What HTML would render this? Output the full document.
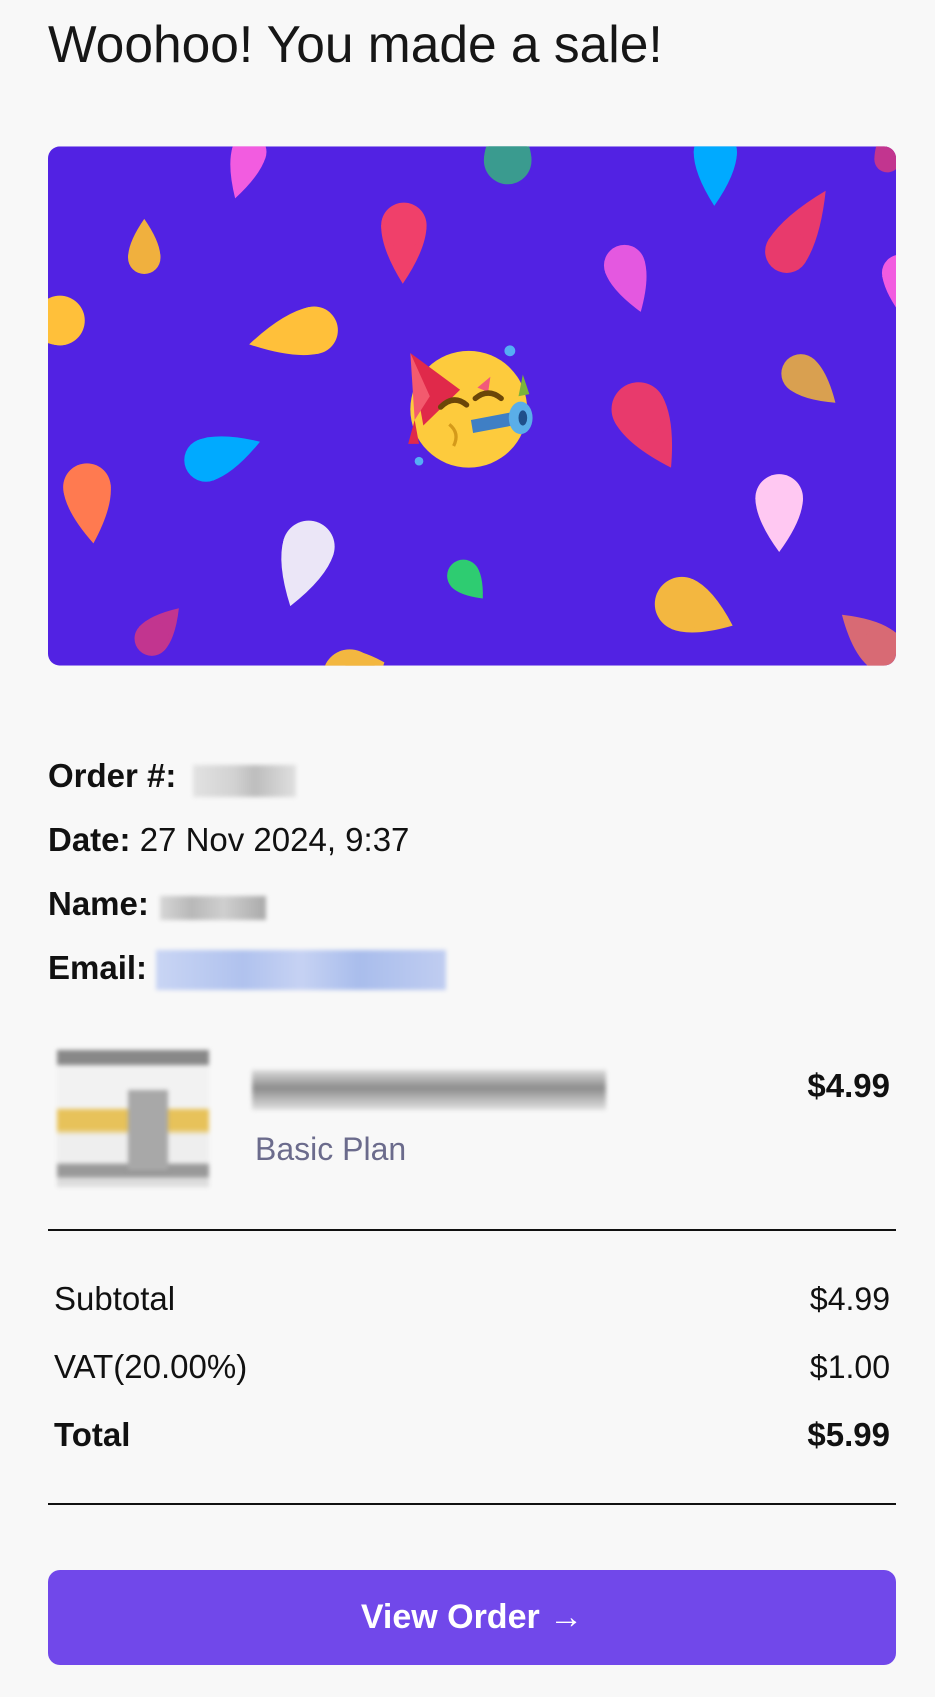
<!DOCTYPE html>
<html><head><meta charset="utf-8"><style>
*{margin:0;padding:0;box-sizing:border-box}
html,body{width:935px;height:1697px;background:#f8f8f8;font-family:"Liberation Sans",sans-serif;color:#111;overflow:hidden}
.abs{position:absolute}
h1{position:absolute;left:48px;top:14px;font-size:51.5px;font-weight:normal;color:#161616}
.row{position:absolute;left:48px;font-size:33px}
.row b{font-weight:bold}
.blur{position:absolute;filter:blur(2px)}
.line{position:absolute;left:48px;width:848px;height:2px;background:#111}
.lbl{position:absolute;left:54px;font-size:33px}
.val{position:absolute;right:45px;font-size:32px}
.btn{position:absolute;left:48px;top:1570px;width:848px;height:95px;background:#7148ea;border-radius:12px;color:#fff;font-weight:bold;font-size:34px;text-align:center;line-height:95px}
</style></head><body>
<h1>Woohoo! You made a sale!</h1>
<svg class="abs" style="left:48px;top:146px" width="848" height="520" viewBox="44 135 784 480">
<defs><clipPath id="c"><rect x="44" y="135" width="784" height="480" rx="11"/></clipPath></defs>
<g clip-path="url(#c)"><rect x="44" y="135" width="784" height="480" fill="#5222e3"/><g id="drops"></g>
<g transform="translate(433,378)">
<circle r="54" fill="#fdcb3d"/>
<path d="M-54,-52 L-42,15 L-8,-18 Z" fill="#e0294a"/>
<path d="M-54,-52 L-50,10 L-36,-12 Z" fill="#f35a6e"/>
<path d="M8,-20 L20,-30 L18,-16Z" fill="#f25a7a"/>
<path d="M50,-32 L56,-14 L46,-12Z" fill="#7bb33a"/>
<circle cx="38" cy="-54" r="5" fill="#55aef5"/>
<circle cx="-46" cy="48" r="4" fill="#55aef5"/>
<path d="M-50,10 L-46,32 L-56,32Z" fill="#e0294a"/>
<path d="M-26,-2 Q-14,-14 -2,-4" stroke="#6b4608" stroke-width="5" fill="none" stroke-linecap="round"/>
<path d="M6,-10 Q18,-20 30,-10" stroke="#6b4608" stroke-width="5" fill="none" stroke-linecap="round"/>
<path d="M-18,14 Q-8,22 -14,34" stroke="#d49a1a" stroke-width="3" fill="none"/>
<path d="M2,10 L44,2 L46,14 L4,22Z" fill="#3f7fc5"/>
<ellipse cx="48" cy="8" rx="11" ry="15" fill="#5aaee8"/>
<ellipse cx="50" cy="8" rx="4" ry="7" fill="#1f4f8a"/>
</g></g></svg>
<div class="row" style="top:757px"><b>Order #:</b></div>
<div class="blur" style="left:193px;top:765px;width:103px;height:32px;background:linear-gradient(90deg,#e2e2e2,#d2d2d2 40%,#bdbdbd 60%,#e0e0e0)"></div>
<div class="row" style="top:821px"><b>Date:</b> 27 Nov 2024, 9:37</div>
<div class="row" style="top:885px"><b>Name:</b></div>
<div class="blur" style="left:160px;top:896px;width:106px;height:24px;background:linear-gradient(90deg,#d6d6d6,#b8b8b8 30%,#cfcfcf 60%,#aaa)"></div>
<div class="row" style="top:949px"><b>Email:</b></div>
<div class="blur" style="left:156px;top:950px;width:290px;height:40px;background:linear-gradient(90deg,#c9d5f4,#b0c2ee 30%,#c6d2f3 50%,#a9bdec 70%,#c0cdf1)"></div>
<div class="blur" style="left:57px;top:1050px;width:152px;height:137px;background:linear-gradient(180deg,#888 0,#888 10%,#f2f2f2 12%,#f2f2f2 42%,#e7c25a 44%,#e7c25a 58%,#eee 62%,#eee 82%,#999 84%,#999 92%,#ddd 94%)"></div>
<div class="blur" style="left:128px;top:1090px;width:40px;height:80px;background:#a8a8a8"></div>
<div class="blur" style="left:252px;top:1070px;width:354px;height:40px;background:linear-gradient(180deg,#dcdcdc,#8c8c8c 45%,#e2e2e2)"></div>
<div class="abs" style="left:255px;top:1131px;font-size:32px;color:#6b6b8c">Basic Plan</div>
<div class="abs" style="right:45px;top:1067px;font-size:33px;font-weight:bold">$4.99</div>
<div class="line" style="top:1229px"></div>
<div class="lbl" style="top:1280px">Subtotal</div><div class="val" style="top:1281px">$4.99</div>
<div class="lbl" style="top:1348px">VAT(20.00%)</div><div class="val" style="top:1349px">$1.00</div>
<div class="lbl" style="top:1416px;font-weight:bold">Total</div><div class="val" style="top:1416px;font-weight:bold;font-size:33px">$5.99</div>
<div class="line" style="top:1503px"></div>
<div class="btn">View Order →</div>
<script>
var D=[["#f25ce0",230,140,16,217,183],["#3a9b8f",469,148,22,469,100],["#00aaff",661,140,20,660,190],["#c2358f",820,147,12,820,110],
["#f0b03e",133,238,15,133,202],["#f0406a",373,208,21,372,262],["#e83a6c",727,232,20,763,176],["#e458e0",577,245,19,592,288],
["#f25ce0",832,252,17,840,300],["#ffc03a",55,296,23,20,305],["#ffc03a",290,305,22,230,318],["#d9a050",740,345,18,772,372],
["#e83a6c",590,378,25,620,432],["#00aaff",190,425,20,240,408],["#ff7a50",80,450,22,86,502],["#ffc8f2",720,460,22,720,510],
["#ebe6f7",285,505,24,268,560],["#2ecc71",428,532,15,446,553],["#f3b740",630,558,25,677,578],["#c2358f",140,590,16,165,562],
["#f3b740",323,625,25,355,612],["#d86a74",815,600,20,778,568]];
var g=document.getElementById('drops'),h='';
D.forEach(function(a){var cx=a[1],cy=a[2],r=a[3],tx=a[4],ty=a[5],dx=tx-cx,dy=ty-cy,L=Math.hypot(dx,dy);dx/=L;dy/=L;var nx=-dy,ny=dx;
var p1x=cx+nx*r,p1y=cy+ny*r,p2x=cx-nx*r,p2y=cy-ny*r,k=L*0.4;
h+='<path fill="'+a[0]+'" d="M'+tx+' '+ty+' Q'+(p1x+dx*k)+' '+(p1y+dy*k)+' '+p1x+' '+p1y+' L'+p2x+' '+p2y+' Q'+(p2x+dx*k)+' '+(p2y+dy*k)+' '+tx+' '+ty+'Z"/><circle fill="'+a[0]+'" cx="'+cx+'" cy="'+cy+'" r="'+r+'"/>';});
g.innerHTML=h;
</script>
</body></html>
